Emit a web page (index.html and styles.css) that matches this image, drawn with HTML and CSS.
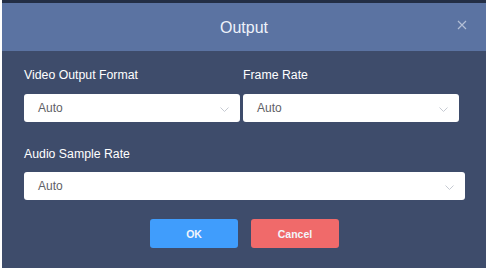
FILE: index.html
```
<!DOCTYPE html>
<html>
<head>
<meta charset="utf-8">
<link rel="stylesheet" href="styles.css">
</head>
<body>
<div class="dialog">
  <div class="header">
    <span class="title">Output</span>
    <svg class="close" width="10" height="10" viewBox="0 0 10 10"><path d="M1 1L9 9M9 1L1 9" stroke="#b3bfd6" stroke-width="1.2" fill="none"/></svg>
  </div>
  <div class="content">
    <div class="row">
      <div class="field">
        <div class="label">Video Output Format</div>
        <div class="select"><span>Auto</span><svg class="chev" width="9" height="5" viewBox="0 0 9 5"><path d="M0.5 0.5L4.5 4.5L8.5 0.5" stroke="#c6cad2" stroke-width="1" fill="none"/></svg></div>
      </div>
      <div class="field">
        <div class="label">Frame Rate</div>
        <div class="select"><span>Auto</span><svg class="chev" width="9" height="5" viewBox="0 0 9 5"><path d="M0.5 0.5L4.5 4.5L8.5 0.5" stroke="#c6cad2" stroke-width="1" fill="none"/></svg></div>
      </div>
    </div>
    <div class="field wide">
      <div class="label">Audio Sample Rate</div>
      <div class="select"><span>Auto</span><svg class="chev" width="9" height="5" viewBox="0 0 9 5"><path d="M0.5 0.5L4.5 4.5L8.5 0.5" stroke="#c6cad2" stroke-width="1" fill="none"/></svg></div>
    </div>
    <div class="buttons">
      <button class="btn ok">OK</button>
      <button class="btn cancel">Cancel</button>
    </div>
  </div>
</div>
</body>
</html>
```
FILE: styles.css
```
html, body {
  margin: 0;
  padding: 0;
  background: #ffffff;
}
body {
  width: 489px;
  height: 273px;
  font-family: "Liberation Sans", Arial, sans-serif;
}
.dialog {
  margin-left: 2px;
  width: 484px;
  height: 268px;
  background: #3e4c6b;
  display: flex;
  flex-direction: column;
}
.header {
  border-top: 3px solid #232e45;
  height: 48px;
  background: #5b73a2;
  display: flex;
  align-items: center;
  justify-content: center;
  position: relative;
}
.title {
  color: #eef2fa;
  font-size: 16px;
  margin-top: 1px;
}
.close {
  position: absolute;
  right: 19px;
  top: 17px;
}
.content {
  padding: 16px 0 0 22px;
  display: flex;
  flex-direction: column;
}
.row {
  display: flex;
  gap: 3px;
}
.field {
  display: flex;
  flex-direction: column;
  width: 216px;
}
.field.wide {
  width: 441px;
  margin-top: 24px;
}
.label {
  color: #ffffff;
  font-size: 12.3px;
  line-height: 16px;
  margin-bottom: 11px;
}
.field.wide .label {
  margin-bottom: 10px;
}
.select {
  height: 28px;
  background: #ffffff;
  border-radius: 3px;
  display: flex;
  align-items: center;
  justify-content: space-between;
  padding: 0 11px 0 14px;
  color: #5f6166;
  font-size: 12px;
}
.chev {
  margin-top: 2px;
}
.buttons {
  display: flex;
  gap: 13px;
  margin-top: 19px;
  padding-left: 126px;
}
.btn {
  width: 88px;
  height: 29px;
  border: none;
  border-radius: 3px;
  color: #f3f6fb;
  font-family: "Liberation Sans", Arial, sans-serif;
  font-size: 10.5px;
  font-weight: bold;
  padding: 0;
}
.ok {
  background: #409dfc;
}
.cancel {
  background: #f06a6a;
}
```
